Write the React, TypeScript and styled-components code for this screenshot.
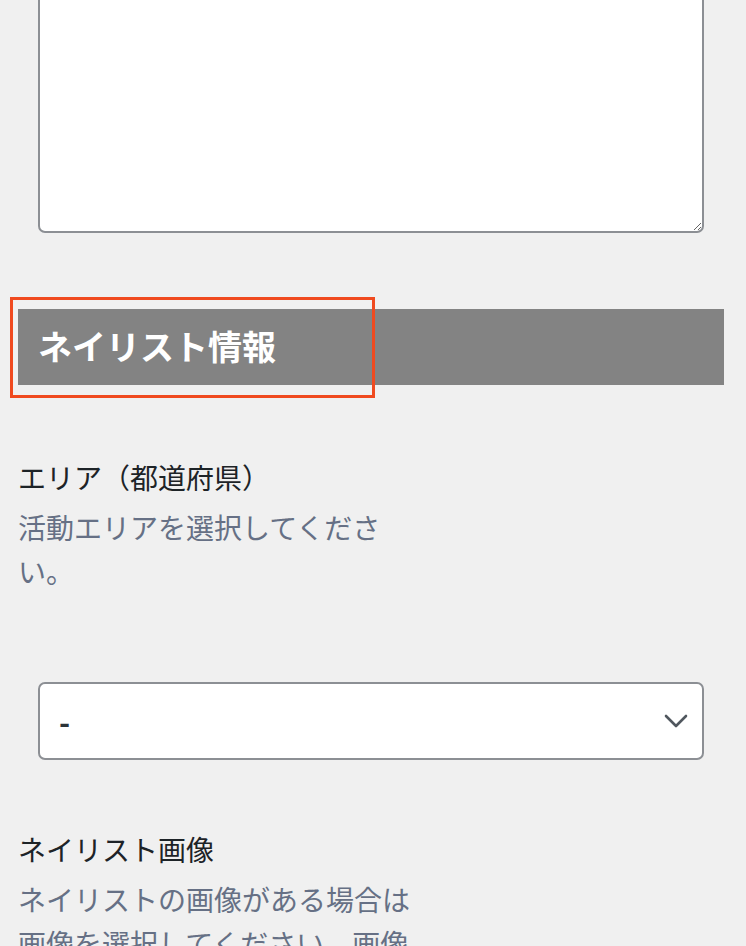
import * as React from "react";
import styled, { createGlobalStyle } from "styled-components";

const GlobalStyle = createGlobalStyle`
  html, body {
    margin: 0;
    padding: 0;
    background: #f0f0f0;
    overflow: hidden;
  }
  body {
    font-family: "Noto Sans CJK JP", "Noto Sans", sans-serif;
    color: #1d2327;
  }
`;

const Page = styled.div`
  width: 746px;
  height: 946px;
  overflow: hidden;
  padding: 0 22px 0 18px;
  box-sizing: border-box;
`;

const Field = styled.div<{ $top?: number }>`
  display: flex;
  flex-direction: column;
  padding-top: ${(p) => p.$top ?? 0}px;
`;

const TextArea = styled.textarea`
  display: block;
  box-sizing: border-box;
  margin: -30px 20px 0;
  width: 666px;
  height: 263px;
  background: #fff;
  border: 2px solid #8c8f94;
  border-radius: 7px;
  resize: vertical;
  outline: none;
`;

const SectionBar = styled.div`
  position: relative;
  margin-top: 76px;
  height: 76px;
  box-sizing: border-box;
  display: flex;
  align-items: center;
  padding: 0 0 4px 20px;
  background: #838383;
  color: #fff;
  font-size: 34px;
  font-weight: 700;
`;

const Highlight = styled.span`
  position: absolute;
  left: -8px;
  top: -12px;
  width: 365px;
  height: 101px;
  box-sizing: border-box;
  border: 3px solid #f04a1f;
  pointer-events: none;
`;

const Label = styled.div`
  font-size: 28px;
  line-height: 40px;
  color: #1d2327;
`;

const Description = styled.p`
  margin: 8px 0 0;
  width: 400px;
  font-size: 28px;
  line-height: 44px;
  color: #667085;
  line-break: strict;
`;

const SelectBox = styled.div`
  margin: 89px 20px 0;
  height: 78px;
  box-sizing: border-box;
  display: flex;
  align-items: center;
  justify-content: space-between;
  padding: 0 14px 0 19px;
  background: #fff;
  border: 2px solid #8c8f94;
  border-radius: 7px;
  font-size: 28px;
  color: #2c3338;
`;

const SelectValue = styled.span`
  font-weight: 700;
  font-size: 30px;
`;

const Chevron = () => (
  <svg width="24" height="14" viewBox="0 0 24 14" fill="none">
    <path
      d="M2 2 L12 12 L22 2"
      stroke="#50575e"
      strokeWidth="2.6"
      strokeLinecap="round"
      strokeLinejoin="round"
    />
  </svg>
);

export default function App(): JSX.Element {
  return (
    <Page>
      <GlobalStyle />
      <TextArea />

      <SectionBar>
        <Highlight />
        ネイリスト情報
      </SectionBar>

      <Field $top={72}>
        <Label>エリア（都道府県）</Label>
        <Description>活動エリアを選択してください。</Description>
      </Field>

      <SelectBox>
        <SelectValue>-</SelectValue>
        <Chevron />
      </SelectBox>

      <Field $top={69}>
        <Label>ネイリスト画像</Label>
        <Description>
          ネイリストの画像がある場合は画像を選択してください。画像
        </Description>
      </Field>
    </Page>
  );
}
